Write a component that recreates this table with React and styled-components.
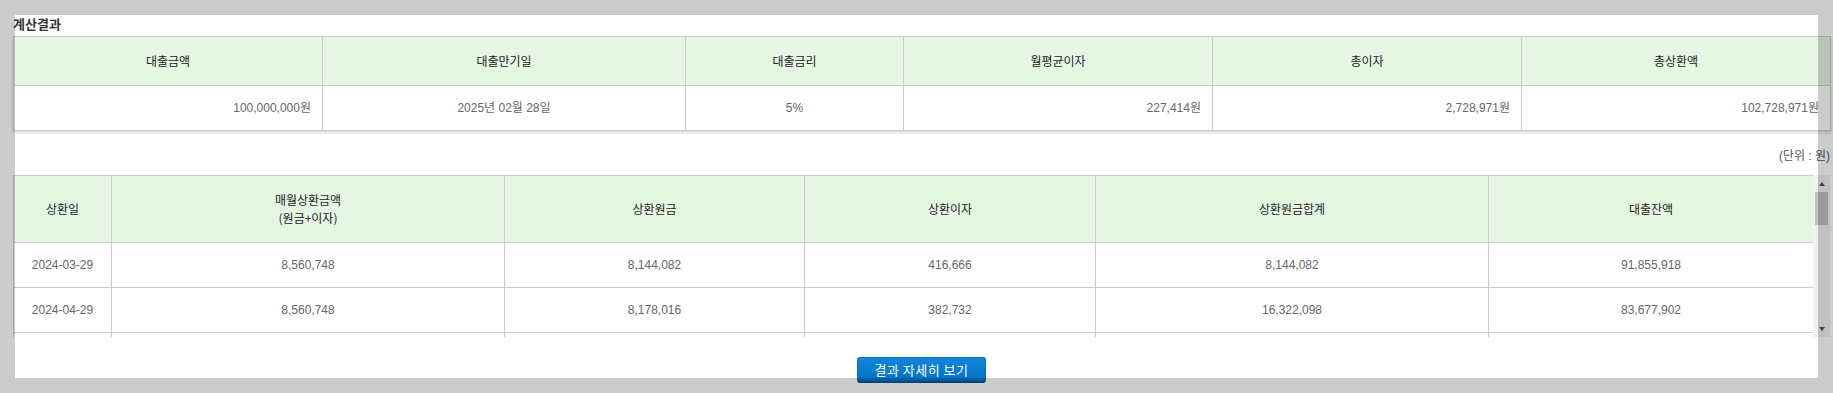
import React from "react";
import styled, { createGlobalStyle } from "styled-components";

const GlobalStyle = createGlobalStyle`
  html, body { margin: 0; padding: 0; background: #ffffff; }
  body {
    font-family: "Liberation Sans", "Noto Sans CJK KR", sans-serif;
    font-size: 12px;
    color: #333;
  }
`;

const Page = styled.div`
  padding: 15px 3px 0 13px;
`;

const Title = styled.h3`
  margin: 0 0 3px;
  font-family: "Noto Sans CJK KR", sans-serif;
  font-size: 13px;
  line-height: 18px;
  font-weight: 700;
  color: #333;
`;

const Table = styled.table`
  width: 100%;
  table-layout: fixed;
  border-collapse: collapse;
  border: 1px solid #cccccc;
  ${(p) => (p.$shadow ? "box-shadow: 0 2px 3px rgba(0, 0, 0, 0.16);" : "")}
`;

const HeadCell = styled.th`
  box-sizing: border-box;
  height: ${(p) => p.$h}px;
  padding: 0 6px;
  border: 1px solid #cccccc;
  background: #e5f6e3;
  font-family: "Noto Sans CJK KR", sans-serif;
  font-size: 12px;
  line-height: 18px;
  font-weight: 400;
  color: #222;
  text-align: center;
  vertical-align: middle;
`;

const BodyCell = styled.td`
  box-sizing: border-box;
  height: 45px;
  padding: 0 11px;
  border: 1px solid #cccccc;
  background: #ffffff;
  font-size: 12px;
  line-height: 18px;
  color: #666;
  text-align: ${(p) => p.$align || "center"};
  vertical-align: middle;
  white-space: nowrap;
`;

const UnitNote = styled.div`
  margin: 16px 0 10px;
  text-align: right;
  font-size: 12px;
  line-height: 18px;
  color: #555;
`;

const ScheduleFrame = styled.div`
  display: flex;
  height: 162px;
`;

const ScheduleViewport = styled.div`
  flex: 1;
  overflow: hidden;
`;

const ScrollTrack = styled.div`
  width: 17px;
  flex: none;
  display: flex;
  flex-direction: column;
  background: #f1f1f1;
`;

const ScrollButton = styled.div`
  height: 17px;
  flex: none;
  display: flex;
  align-items: center;
  justify-content: center;
  &::before {
    content: "";
    width: 0;
    height: 0;
    border-left: 3.5px solid transparent;
    border-right: 3.5px solid transparent;
    ${(p) =>
      p.$down
        ? "border-top: 4px solid #505050;"
        : "border-bottom: 4px solid #505050;"}
  }
`;

const ScrollSpace = styled.div`
  flex: 1;
`;

const ScrollThumb = styled.div`
  height: 33px;
  margin: 0 2px;
  background: #c1c1c1;
`;

const ButtonRow = styled.div`
  display: flex;
  justify-content: center;
  margin-top: 20px;
`;

const DetailButton = styled.button`
  box-sizing: border-box;
  width: 129px;
  height: 26px;
  padding: 0;
  border: 1px solid #0a6fbd;
  border-bottom: 2px solid #00579c;
  border-radius: 3px;
  background: linear-gradient(#1186da, #0072c6);
  color: #ffffff;
  font-family: "Noto Sans CJK KR", sans-serif;
  font-size: 13px;
  line-height: 22px;
  letter-spacing: 0.5px;
  cursor: pointer;
`;

const FrameOverlay = styled.div`
  position: fixed;
  inset: 0;
  border: 15px solid rgba(0, 0, 0, 0.2);
  pointer-events: none;
`;

const summary = [
  { head: "대출금액", value: "100,000,000원", align: "right", w: 309 },
  { head: "대출만기일", value: "2025년 02월 28일", align: "center", w: 363 },
  { head: "대출금리", value: "5%", align: "center", w: 218 },
  { head: "월평균이자", value: "227,414원", align: "right", w: 309 },
  { head: "총이자", value: "2,728,971원", align: "right", w: 309 },
  { head: "총상환액", value: "102,728,971원", align: "right", w: 309 },
];

const scheduleCols = [
  { head: ["상환일"], w: 98 },
  { head: ["매월상환금액", "(원금+이자)"], w: 393 },
  { head: ["상환원금"], w: 300 },
  { head: ["상환이자"], w: 291 },
  { head: ["상환원금합계"], w: 393 },
  { head: ["대출잔액"], w: 325 },
];

const fmt = (n) => n.toLocaleString("en-US");

function buildSchedule() {
  const rows = [];
  let balance = 100000000;
  let paid = 0;
  const payment = 8560748;
  for (let i = 0; i < 12; i++) {
    const month = ((2 + i) % 12) + 1;
    const year = 2024 + Math.floor((2 + i) / 12);
    const day = month === 2 ? 28 : 29;
    const date = `${year}-${String(month).padStart(2, "0")}-${day}`;
    const interest = Math.floor((balance * 0.05) / 12);
    let principal = payment - interest;
    if (i === 11) principal = balance;
    paid += principal;
    balance -= principal;
    rows.push([
      date,
      fmt(principal + interest),
      fmt(principal),
      fmt(interest),
      fmt(paid),
      fmt(balance),
    ]);
  }
  return rows;
}

const schedule = buildSchedule();

export default function App() {
  return (
    <>
      <GlobalStyle />
      <Page>
        <Title>계산결과</Title>
        <Table $shadow>
          <colgroup>
            {summary.map((c) => (
              <col key={c.head} style={{ width: c.w }} />
            ))}
          </colgroup>
          <thead>
            <tr>
              {summary.map((c) => (
                <HeadCell key={c.head} $h={49}>
                  {c.head}
                </HeadCell>
              ))}
            </tr>
          </thead>
          <tbody>
            <tr>
              {summary.map((c) => (
                <BodyCell key={c.head} $align={c.align}>
                  {c.value}
                </BodyCell>
              ))}
            </tr>
          </tbody>
        </Table>

        <UnitNote>(단위 : 원)</UnitNote>

        <ScheduleFrame>
          <ScheduleViewport>
            <Table>
              <colgroup>
                {scheduleCols.map((c) => (
                  <col key={c.head[0]} style={{ width: c.w }} />
                ))}
              </colgroup>
              <thead>
                <tr>
                  {scheduleCols.map((c) => (
                    <HeadCell key={c.head[0]} $h={67}>
                      {c.head.map((line, i) => (
                        <React.Fragment key={line}>
                          {i > 0 && <br />}
                          {line}
                        </React.Fragment>
                      ))}
                    </HeadCell>
                  ))}
                </tr>
              </thead>
              <tbody>
                {schedule.map((row) => (
                  <tr key={row[0]}>
                    {row.map((v, i) => (
                      <BodyCell key={i}>{v}</BodyCell>
                    ))}
                  </tr>
                ))}
              </tbody>
            </Table>
          </ScheduleViewport>
          <ScrollTrack>
            <ScrollButton />
            <ScrollThumb />
            <ScrollSpace />
            <ScrollButton $down />
          </ScrollTrack>
        </ScheduleFrame>

        <ButtonRow>
          <DetailButton type="button">결과 자세히 보기</DetailButton>
        </ButtonRow>
      </Page>
      <FrameOverlay />
    </>
  );
}
